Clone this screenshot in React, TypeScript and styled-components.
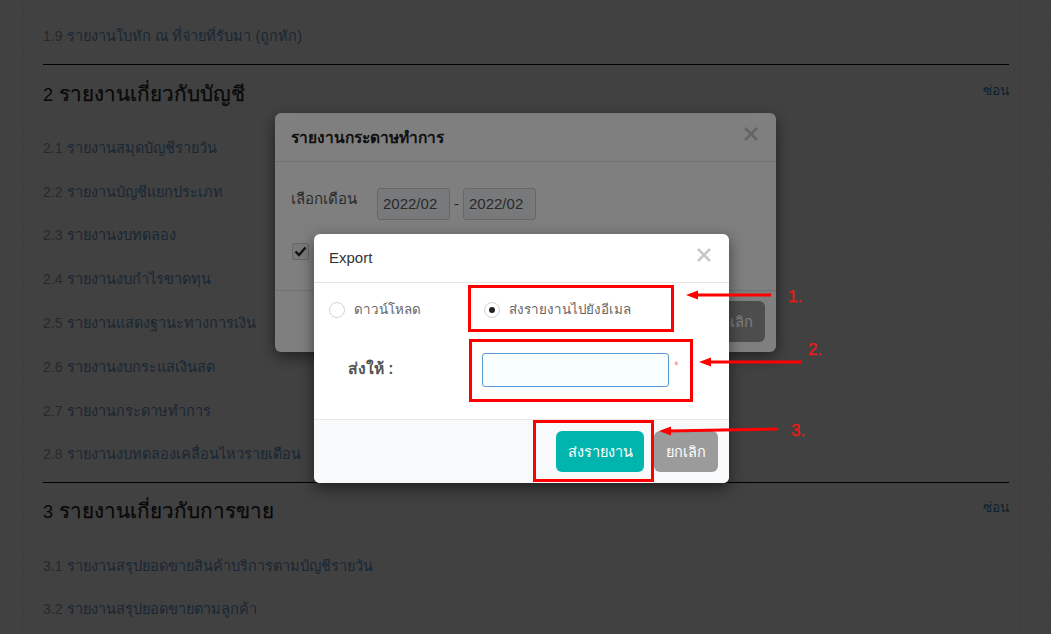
import React from "react";
import styled, { createGlobalStyle } from "styled-components";

const Global = createGlobalStyle`
  html, body { margin: 0; padding: 0; overflow: hidden; background: #f4f4f4; }
  body { font-family: "Liberation Sans", Arial, sans-serif; }
  * { box-sizing: border-box; }
`;

const Stage = styled.div`
  position: relative;
  width: 1051px;
  height: 634px;
  overflow: hidden;
  background: repeating-linear-gradient(135deg, #fbfbfb 0 2px, #f3f3f3 2px 4px);
`;
const Panel = styled.main`
  margin-left: 22px;
  width: 998px;
  height: 634px;
  background: #f8f8f8;
  border-left: 1px solid #e2e2e2;
  border-right: 1px solid #e2e2e2;
  padding: 14px 10px 0 20px;
`;
const Section = styled.section<{ $last?: boolean }>`
  padding-bottom: ${(p) => (p.$last ? 0 : 6)}px;
  border-bottom: ${(p) => (p.$last ? "none" : "1px solid #000")};
`;
const SectionHead = styled.div<{ $h: number; $pad: number }>`
  display: flex;
  justify-content: space-between;
  align-items: flex-start;
  height: ${(p) => p.$h}px;
  padding-top: ${(p) => p.$pad}px;
`;
const SectionTitle = styled.h2`
  margin: 0;
  font-size: 18px;
  line-height: 34px;
  font-weight: 400;
  color: #222;
`;
const TitleThai = styled.span`
  font-size: 20.7px;
  margin-left: 1px;
  -webkit-text-stroke: 0.25px #222;
`;
const HideLink = styled.a`
  font-size: 13.6px;
  line-height: 24px;
  margin-top: 2px;
  color: #337ab7;
`;
const Item = styled.div`
  height: 43.8px;
  font-size: 14px;
  line-height: 44px;
  color: #999;
  white-space: nowrap;
`;
const ItemLink = styled.a`
  font-size: 14.5px;
  margin-left: 1px;
  color: #5f93c4;
`;
const Overlay = styled.div<{ $alpha: number }>`
  position: absolute;
  inset: 0;
  background: rgba(0, 0, 0, ${(p) => p.$alpha});
`;
const Modal = styled.div<{ $x: number; $y: number; $w: number; $h: number }>`
  position: absolute;
  left: ${(p) => p.$x}px;
  top: ${(p) => p.$y}px;
  width: ${(p) => p.$w}px;
  height: ${(p) => p.$h}px;
  background: #fff;
  border-radius: 6px;
  box-shadow: 0 5px 15px rgba(0, 0, 0, 0.5);
  display: flex;
  flex-direction: column;
  overflow: hidden;
`;
const ModalHeader = styled.header<{ $h: number; $px: number }>`
  height: ${(p) => p.$h}px;
  flex: none;
  display: flex;
  align-items: center;
  justify-content: space-between;
  padding: 0 16px 0 ${(p) => p.$px}px;
  border-bottom: 1px solid #e5e5e5;
`;
const ModalTitle = styled.div`
  font-size: 15.5px;
  font-weight: 700;
  color: #222;
`;
const ExportTitle = styled.div`
  font-size: 15px;
  margin-top: -2px;
  color: #333;
`;
const CloseIcon = styled.svg`
  width: 14px;
  height: 14px;
  margin-top: -6px;
  margin-right: 2px;
  stroke: #c8c8c8;
  stroke-width: 2.6;
`;
const DateRow = styled.div`
  display: flex;
  align-items: flex-start;
  padding: 26px 0 0 16px;
  font-size: 15px;
  color: #555;
  height: 73px;
`;
const DateLabel = styled.span`
  width: 86px;
  line-height: 21px;
`;
const DateInput = styled.div`
  width: 73px;
  height: 32px;
  border: 1px solid #ccc;
  border-radius: 3px;
  background: #eef3f6;
  font-size: 15px;
  line-height: 30px;
  padding-left: 5px;
  color: #555;
`;
const Dash = styled.span`
  width: 13px;
  line-height: 32px;
  text-align: center;
`;
const CheckRow = styled.div`
  height: 55px;
  padding: 8px 0 0 17px;
`;
const CheckBox = styled.div`
  width: 17px;
  height: 17px;
  border: 1px solid #ccc;
  border-radius: 2px;
  background: #f3f3f3;
  display: flex;
  align-items: center;
  justify-content: center;
`;
const BackFooter = styled.footer`
  flex: 1;
  border-top: 1px solid #e5e5e5;
  display: flex;
  justify-content: flex-end;
  align-items: flex-start;
  padding: 10px 11px 0 0;
`;
const Btn = styled.button<{ $bg: string; $w: number }>`
  width: ${(p) => p.$w}px;
  height: 41px;
  border: 0;
  border-radius: 6px;
  background: ${(p) => p.$bg};
  color: #fff;
  font-family: inherit;
  font-size: 14.5px;
  padding: 0;
`;
const RadioRow = styled.div`
  height: 53px;
  display: flex;
  align-items: center;
  padding: 0 0 0 15px;
  font-size: 13.4px;
  color: #666;
`;
const RadioOption = styled.label<{ $w: number }>`
  width: ${(p) => p.$w}px;
  display: flex;
  align-items: center;
  gap: 9px;
`;
const RadioDot = styled.span<{ $on?: boolean }>`
  width: 16px;
  height: 16px;
  border-radius: 50%;
  border: 1px solid #d4d4d4;
  background: #fff;
  display: flex;
  align-items: center;
  justify-content: center;
  &::after {
    content: "";
    display: ${(p) => (p.$on ? "block" : "none")};
    width: 6px;
    height: 6px;
    border-radius: 50%;
    background: #222;
  }
`;
const ToRow = styled.div`
  height: 83px;
  display: flex;
  align-items: flex-start;
  padding-top: 17px;
`;
const ToLabel = styled.div`
  width: 168px;
  padding: 6px 0 0 34px;
  font-size: 15.7px;
  font-weight: 700;
  color: #555;
  line-height: 20px;
`;
const EmailInput = styled.div`
  width: 187px;
  height: 34px;
  border: 1px solid #5b9bd5;
  border-radius: 3px;
  background: #f8fdff;
`;
const Required = styled.span`
  margin: 5px 0 0 5px;
  font-size: 12px;
  line-height: 16px;
  color: #f28b95;
`;
const ExportFooter = styled.footer`
  flex: 1;
  background: #f8f9fb;
  border-top: 1px solid #e8e8e8;
  display: flex;
  justify-content: flex-end;
  gap: 10px;
  padding: 11px 11px 0 0;
`;
const RedBox = styled.div<{ $x: number; $y: number; $w: number; $h: number }>`
  position: absolute;
  left: ${(p) => p.$x}px;
  top: ${(p) => p.$y}px;
  width: ${(p) => p.$w}px;
  height: ${(p) => p.$h}px;
  border: 3px solid #ff0000;
`;
const Step = styled.span<{ $x: number; $y: number }>`
  position: absolute;
  left: ${(p) => p.$x}px;
  top: ${(p) => p.$y}px;
  font-size: 17px;
  font-weight: 400;
  -webkit-text-stroke: 0.25px #f01818;
  line-height: 20px;
  color: #f01818;
`;
const Arrows = styled.svg`
  position: absolute;
  left: 0;
  top: 0;
  width: 1051px;
  height: 634px;
  pointer-events: none;
`;

const sections = [
  { id: "2", title: "รายงานเกี่ยวกับบัญชี", h: 61, pad: 12, items: [
    ["2.1", "รายงานสมุดบัญชีรายวัน"], ["2.2", "รายงานบัญชีแยกประเภท"], ["2.3", "รายงานงบทดลอง"],
    ["2.4", "รายงานงบกำไรขาดทุน"], ["2.5", "รายงานแสดงฐานะทางการเงิน"], ["2.6", "รายงานงบกระแสเงินสด"],
    ["2.7", "รายงานกระดาษทำการ"], ["2.8", "รายงานงบทดลองเคลื่อนไหวรายเดือน"],
  ] },
  { id: "3", title: "รายงานเกี่ยวกับการขาย", h: 60.5, pad: 11, items: [
    ["3.1", "รายงานสรุปยอดขายสินค้าบริการตามบัญชีรายวัน"], ["3.2", "รายงานสรุปยอดขายตามลูกค้า"],
  ] },
];

const Close = () => (
  <CloseIcon viewBox="0 0 14 14"><path d="M1 1l12 12M13 1L1 13" /></CloseIcon>
);
const Arrow = ({ d, tip }: { d: string; tip: string }) => (
  <g>
    <path d={d} stroke="#ff0000" strokeWidth="2.8" fill="none" />
    <polygon points={tip} fill="#ff0000" />
  </g>
);

export default function App() {
  return (
    <Stage>
      <Global />
      <Panel>
        <Section>
          <Item><span>1.9 </span><ItemLink>รายงานใบหัก ณ ที่จ่ายที่รับมา (ถูกหัก)</ItemLink></Item>
        </Section>
        {sections.map((s, i) => (
          <Section key={s.id} $last={i === 1}>
            <SectionHead $h={s.h} $pad={s.pad}>
              <SectionTitle>{s.id} <TitleThai>{s.title}</TitleThai></SectionTitle>
              <HideLink>ซ่อน</HideLink>
            </SectionHead>
            {s.items.map(([n, t]) => (
              <Item key={n}><span>{n} </span><ItemLink>{t}</ItemLink></Item>
            ))}
          </Section>
        ))}
      </Panel>
      <Overlay $alpha={0.47} />
      <Modal $x={275} $y={113} $w={501} $h={239}>
        <ModalHeader $h={49} $px={16}>
          <ModalTitle>รายงานกระดาษทำการ</ModalTitle>
          <Close />
        </ModalHeader>
        <DateRow>
          <DateLabel>เลือกเดือน</DateLabel>
          <DateInput>2022/02</DateInput>
          <Dash>-</Dash>
          <DateInput>2022/02</DateInput>
        </DateRow>
        <CheckRow>
          <CheckBox>
            <svg width="13" height="11" viewBox="0 0 13 11"><path d="M1.5 5.5l3.5 3.5 6.5-7.5" fill="none" stroke="#222" strokeWidth="2.4" /></svg>
          </CheckBox>
        </CheckRow>
        <BackFooter><Btn $bg="#9b9b9b" $w={64}>ยกเลิก</Btn></BackFooter>
      </Modal>
      <Overlay $alpha={0.5} />
      <Modal $x={314} $y={234} $w={415} $h={249}>
        <ModalHeader $h={49} $px={15}>
          <ExportTitle>Export</ExportTitle>
          <Close />
        </ModalHeader>
        <RadioRow>
          <RadioOption $w={155}><RadioDot />ดาวน์โหลด</RadioOption>
          <RadioOption $w={200}><RadioDot $on />ส่งรายงานไปยังอีเมล</RadioOption>
        </RadioRow>
        <ToRow>
          <ToLabel>ส่งให้ :</ToLabel>
          <EmailInput />
          <Required>*</Required>
        </ToRow>
        <ExportFooter>
          <Btn $bg="#00b5ad" $w={88}>ส่งรายงาน</Btn>
          <Btn $bg="#9b9b9b" $w={64}>ยกเลิก</Btn>
        </ExportFooter>
      </Modal>
      <RedBox $x={468} $y={285} $w={206} $h={47} />
      <RedBox $x={469} $y={339} $w={224} $h={63} />
      <RedBox $x={533} $y={420} $w={121} $h={62} />
      <Arrows viewBox="0 0 1051 634">
        <Arrow d="M771 295H695" tip="686,295 698,290.5 698,299.5" />
        <Arrow d="M802 362H708" tip="699,362 711,357.5 711,366.5" />
        <Arrow d="M778 429L668 431" tip="659,431 671,426.5 671,435.5" />
      </Arrows>
      <Step $x={788} $y={287}>1.</Step>
      <Step $x={808} $y={340}>2.</Step>
      <Step $x={791} $y={421}>3.</Step>
    </Stage>
  );
}
